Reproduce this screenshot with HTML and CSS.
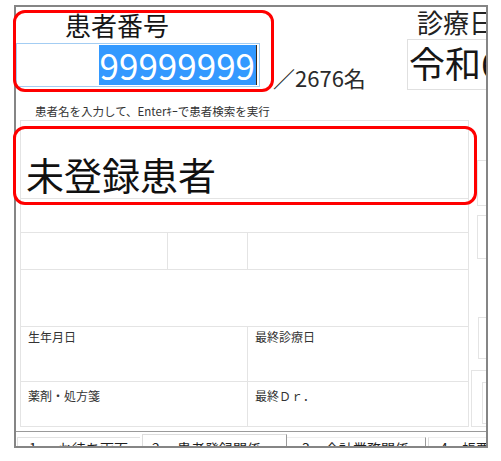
FILE: index.html
```html
<!DOCTYPE html>
<html lang="ja">
<head>
<meta charset="utf-8">
<title>患者登録</title>
<link rel="stylesheet" href="styles.css">
</head>
<body>
<div class="screen">
  <div class="window">
    <div class="top">
      <div class="pid">
        <div class="pid-label">患者番号</div>
        <div class="pid-input"><span class="sel">99999999</span><span class="caret"></span></div>
      </div>
      <div class="count">／2676名</div>
      <div class="date">
        <div class="date-label">診療日</div>
        <div class="date-box">令和6年 5月</div>
      </div>
    </div>
    <div class="hint">患者名を入力して、Enterｷｰで患者検索を実行</div>
    <div class="main">
      <div class="panel">
        <div class="row r-name"><div class="cell grow name">未登録患者</div></div>
        <div class="row r-a"><div class="cell grow"></div></div>
        <div class="row r-b"><div class="cell w1"></div><div class="cell w2"></div><div class="cell grow"></div></div>
        <div class="row r-c"><div class="cell grow"></div></div>
        <div class="row r-d"><div class="cell half label">生年月日</div><div class="cell grow label">最終診療日</div></div>
        <div class="row r-e"><div class="cell half label">薬剤・処方箋</div><div class="cell grow label">最終Ｄｒ．</div></div>
      </div>
      <div class="side">
        <div class="sbox sbox1"></div>
        <div class="sbox sbox2"></div>
        <div class="sbox sbox3"></div>
        <div class="sbox sbox4"><div class="sbox-inner"></div></div>
      </div>
    </div>
    <div class="tabline"></div>
    <div class="tabs">
      <div class="tab tab1"><span class="num n1">1．</span>お待ち画面</div>
      <div class="tab tab2"><span class="num n2">2．</span>患者登録関係</div>
      <div class="tab tab3"><span class="num n3">3．</span>会計業務関係</div>
      <div class="tab tab4"><span class="num n4">4．</span>帳票関係</div>
    </div>
  </div>
  <div class="mark mark-id"></div>
  <div class="mark mark-name"></div>
</div>
</body>
</html>
```

FILE: styles.css
```css
html, body {
  margin: 0;
  padding: 0;
  background: #fff;
}

body {
  font-family: "Noto Sans CJK JP", "Noto Sans", sans-serif;
  color: #161616;
}

.screen {
  position: relative;
  width: 501px;
  height: 461px;
  box-sizing: border-box;
  padding: 5px 0 0 14px;
  background: #fff;
  overflow: hidden;
}

.window {
  width: 474px;
  height: 443px;
  box-sizing: border-box;
  border: 2px solid #858585;
  background: #fff;
  overflow: hidden;
  display: flex;
  flex-direction: column;
}

/* ---------- top area ---------- */
.top {
  display: flex;
  height: 96px;
  flex-shrink: 0;
}

.pid {
  width: 244px;
  flex-shrink: 0;
}

.pid-label {
  height: 36px;
  line-height: 36px;
  font-size: 26px;
  padding-left: 49px;
  white-space: nowrap;
}

.pid-input {
  height: 44px;
  box-sizing: border-box;
  border: 1px solid #a3cdf3;
  display: flex;
  justify-content: flex-end;
  align-items: center;
  padding-right: 2px;
}

.sel {
  display: inline-block;
  height: 40px;
  line-height: 40px;
  font-size: 35px;
  padding: 0 1px;
  background: #3399ff;
  color: #fff;
}

.caret {
  width: 1px;
  height: 40px;
  background: #3a2a1a;
}

.count {
  width: 147px;
  flex-shrink: 0;
  box-sizing: border-box;
  padding-left: 13px;
  margin-top: 59px;
  font-size: 22px;
  line-height: 22px;
  color: #2a2a2a;
  white-space: nowrap;
}

.date {
  width: 150px;
  flex-shrink: 0;
}

.date-label {
  height: 32px;
  line-height: 30px;
  font-size: 26px;
  padding-left: 10px;
  white-space: nowrap;
  color: #222;
}

.date-box {
  height: 51px;
  box-sizing: border-box;
  border: 1px solid #e0e0e0;
  font-size: 36px;
  line-height: 45px;
  padding-left: 1px;
  white-space: nowrap;
}

.hint {
  height: 17px;
  line-height: 17px;
  font-size: 11.5px;
  padding-left: 19px;
  color: #333;
  white-space: nowrap;
  flex-shrink: 0;
}

/* ---------- main panel ---------- */
.main {
  display: flex;
  height: 307px;
  flex-shrink: 0;
}

.panel {
  margin-left: 4px;
  width: 449px;
  flex-shrink: 0;
  box-sizing: border-box;
  border: 1px solid #e4e4e4;
  border-bottom: none;
  display: flex;
  flex-direction: column;
}

.row {
  display: flex;
  box-sizing: border-box;
  border-bottom: 1px solid #e4e4e4;
  flex-shrink: 0;
}

.r-name { height: 78px; }
.r-a { height: 34px; }
.r-b { height: 37px; }
.r-c { height: 57px; }
.r-d { height: 55px; }
.r-e { height: 45px; }

.cell {
  box-sizing: border-box;
  border-right: 1px solid #e4e4e4;
}

.cell.grow {
  flex: 1;
  border-right: none;
}

.w1 { width: 147px; }
.w2 { width: 80px; }
.half { width: 227px; }

.name {
  font-size: 38px;
  line-height: 38px;
  padding: 34px 0 0 5px;
  white-space: nowrap;
  color: #111;
}

.label {
  font-size: 12px;
  line-height: 14px;
  padding-left: 7px;
  color: #333;
  white-space: nowrap;
}

.r-d .label { padding-top: 3px; }
.r-e .label { padding-top: 7px; }

/* ---------- right side column ---------- */
.side {
  flex: 1;
  display: flex;
  flex-direction: column;
  min-width: 0;
}

.sbox {
  box-sizing: border-box;
  border: 1px solid #e4e4e4;
  border-right: none;
  width: 30px;
  flex-shrink: 0;
}

.sbox1 { margin: 40px 0 0 8px; height: 46px; }
.sbox2 { margin: 9px 0 0 8px; height: 44px; }
.sbox3 { margin: 58px 0 0 9px; height: 42px; }
.sbox4 {
  margin: 11px 0 0 2px;
  height: 57px;
  padding: 11px 0 0 10px;
}

.sbox-inner {
  height: 42px;
  box-sizing: border-box;
  border: 1px solid #e4e4e4;
  border-right: none;
}

/* ---------- tabs ---------- */
.tabline {
  height: 1px;
  margin-top: 4px;
  background: #9a9a9a;
  flex-shrink: 0;
}

.tabs {
  display: flex;
  height: 14px;
  flex-shrink: 0;
  align-items: flex-start;
}

.tab {
  box-sizing: border-box;
  height: 30px;
  font-size: 14px;
  line-height: 14px;
  color: #1e1e1e;
  white-space: nowrap;
  flex-shrink: 0;
}

.num { display: inline-block; }

.tab1 {
  margin: 5px 0 0 1px;
  width: 123px;
  border-left: 1px solid #e2e2e2;
  border-top: 1px solid #e2e2e2;
  padding: 3px 0 0 11px;
}
.n1 { width: 29px; }

.tab2 {
  margin: 2px 0 0 2px;
  width: 145px;
  border-left: 1px solid #dddddd;
  border-top: 1px solid #dddddd;
  border-right: 1px solid #9a9a9a;
  padding: 6px 0 0 9px;
}
.n2 { width: 25px; }

.tab3 {
  margin-top: 5px;
  width: 139px;
  border-top: 1px solid #eeeeee;
  border-right: 1px solid #9a9a9a;
  padding: 3px 0 0 15px;
}
.n3 { width: 23px; }

.tab4 {
  margin: 5px 0 0 2px;
  width: 80px;
  border-left: 1px solid #dddddd;
  border-top: 1px solid #eeeeee;
  padding: 3px 0 0 11px;
}
.n4 { width: 22px; }

/* ---------- red annotation marks ---------- */
.mark {
  position: absolute;
  box-sizing: border-box;
  border: 3px solid #ff0000;
  border-radius: 12px;
}

.mark-id {
  left: 13px;
  top: 10px;
  width: 261px;
  height: 82px;
}

.mark-name {
  left: 13px;
  top: 126px;
  width: 464px;
  height: 79px;
}
```
